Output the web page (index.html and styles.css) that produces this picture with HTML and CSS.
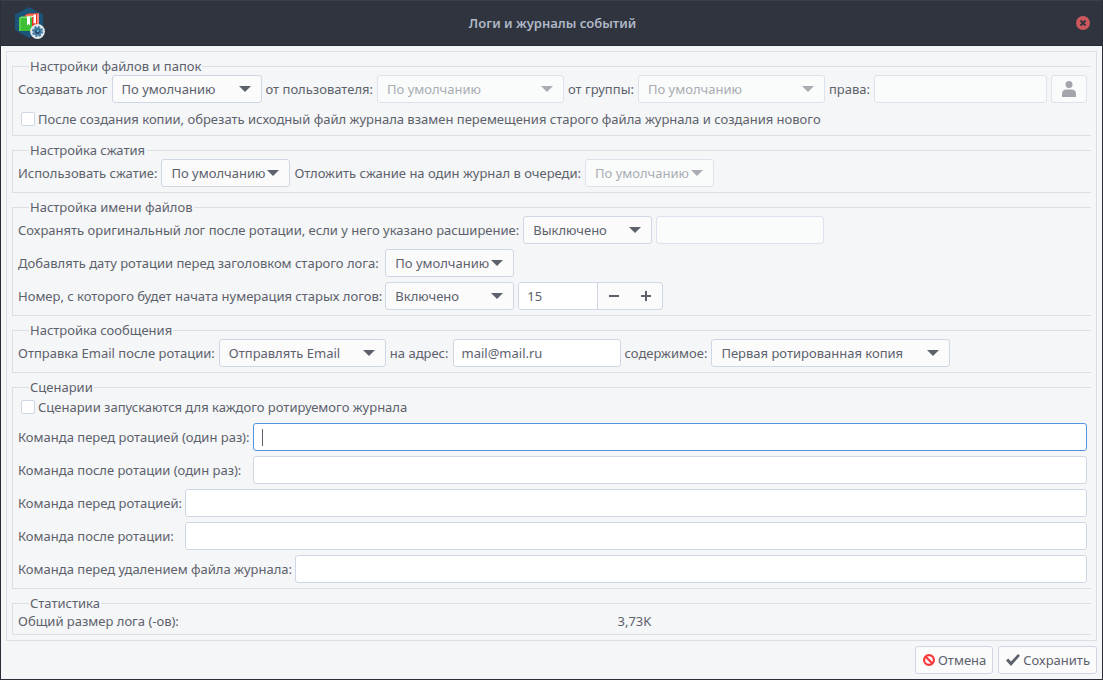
FILE: index.html
```html
<!DOCTYPE html>
<html lang="ru">
<head>
<meta charset="utf-8">
<meta name="viewport" content="width=device-width, initial-scale=1">
<title>Логи и журналы событий</title>
<link rel="stylesheet" href="styles.css">
</head>
<body>
<div class="window">
  <header class="titlebar">
    <svg class="app-icon" viewBox="0 0 32 34" aria-hidden="true">
      <path d="M14 1 28 8.500V24L14 32 0 24V8.500z" fill="#1b5478"/>
      <path d="M10 9 24 7v16l-14 2z" fill="#e8301f"/>
      <path d="M10 9l4-1.500h8L21 10H10z" fill="#ff5a3c"/>
      <path d="M11.500 9.800h7V11h-7z" fill="#fff"/>
      <path d="M18.500 8.500H21V18l-1.200-1.300L18.500 18z" fill="#fff"/>
      <path d="M22 8l2-1v15l-2 1z" fill="#ff8a80"/>
      <path d="M4 12h13v13H4z" fill="#3fbf35"/>
      <path d="M4 12l2-1.500h11V12z" fill="#7ee070"/>
      <path d="M4 12h2v13H4z" fill="#57d04c"/>
      <path d="M12 11h3v8.500L13.500 18 12 19.500z" fill="#fff"/>
      <circle cx="22.500" cy="25.500" r="7.400" fill="#dfe7ea"/>
      <circle cx="22.500" cy="25.500" r="4.300" fill="#4a7fa4"/>
      <circle cx="22.500" cy="25.500" r="4.600" fill="none" stroke="#4a7fa4" stroke-width="2" stroke-dasharray="2 1.600"/>
      <circle cx="22.500" cy="25.500" r="2.300" fill="#23405a"/>
      <circle cx="22.800" cy="25" r="1.200" fill="#58b4e4"/>
    </svg>
    <h1 class="title">Логи и журналы событий</h1>
    <button class="close" type="button" aria-label="Закрыть">
      <svg viewBox="0 0 14 14" aria-hidden="true">
        <circle cx="7" cy="7" r="7" fill="#cc575d"/>
        <path d="M4.500 4.500l5 5m0-5l-5 5" stroke="#2f343f" stroke-width="1.800"/>
      </svg>
    </button>
  </header>

  <form class="content">
    <div class="frame">
      <fieldset class="group">
        <legend>Настройки файлов и папок</legend>
        <div class="row">
          <label for="create">Создавать лог</label>
          <select id="create" class="w150"><option>По умолчанию</option></select>
          <label for="user">от пользователя:</label>
          <select id="user" class="w187" disabled><option>По умолчанию</option></select>
          <label for="grp">от группы:</label>
          <select id="grp" class="w187" disabled><option>По умолчанию</option></select>
          <label for="mode">права:</label>
          <input id="mode" class="grow" type="text" disabled>
          <button class="button user" type="button" disabled aria-label="Выбрать права">
            <svg viewBox="0 0 14 16" aria-hidden="true">
              <circle cx="7" cy="3.500" r="3.500"/>
              <path d="M0 16v-3.500C0 10 2 8.500 4.500 8.500h5C12 8.500 14 10 14 12.500V16z"/>
            </svg>
          </button>
        </div>
        <div class="check">
          <input id="copy" type="checkbox">
          <label for="copy">После создания копии, обрезать исходный файл журнала взамен перемещения старого файла журнала и создания нового</label>
        </div>
      </fieldset>

      <fieldset class="group">
        <legend>Настройка сжатия</legend>
        <div class="row">
          <label for="zip">Использовать сжатие:</label>
          <select id="zip" class="w129"><option>По умолчанию</option></select>
          <label for="delay">Отложить сжание на один журнал в очереди:</label>
          <select id="delay" class="w129" disabled><option>По умолчанию</option></select>
        </div>
      </fieldset>

      <fieldset class="group">
        <legend>Настройка имени файлов</legend>
        <div class="row">
          <label for="ext">Сохранять оригинальный лог после ротации, если у него указано расширение:</label>
          <select id="ext" class="w129"><option>Выключено</option></select>
          <input class="w168" type="text" disabled aria-label="Расширение">
        </div>
        <div class="pair">
          <label for="date">Добавлять дату ротации перед заголовком старого лога:</label>
          <div class="row">
            <select id="date" class="w129"><option>По умолчанию</option></select>
          </div>
          <label for="num">Номер, с которого будет начата нумерация старых логов:</label>
          <div class="row">
            <select id="num" class="w129"><option>Включено</option></select>
            <div class="spin">
              <input type="text" value="15" aria-label="Начальный номер">
              <button type="button" aria-label="Уменьшить"><svg viewBox="0 0 10 10" aria-hidden="true"><path d="M0 5h10"/></svg></button>
              <button type="button" aria-label="Увеличить"><svg viewBox="0 0 10 10" aria-hidden="true"><path d="M0 5h10M5 0v10"/></svg></button>
            </div>
          </div>
        </div>
      </fieldset>

      <fieldset class="group">
        <legend>Настройка сообщения</legend>
        <div class="row">
          <label for="send">Отправка Email после ротации:</label>
          <select id="send" class="w167"><option>Отправлять Email</option></select>
          <label for="mail">на адрес:</label>
          <input id="mail" class="w168" type="text" value="mail@mail.ru">
          <label for="body">содержимое:</label>
          <select id="body" class="w239"><option>Первая ротированная копия</option></select>
        </div>
      </fieldset>

      <fieldset class="group">
        <legend>Сценарии</legend>
        <div class="check">
          <input id="each" type="checkbox">
          <label for="each">Сценарии запускаются для каждого ротируемого журнала</label>
        </div>
        <div class="pair">
          <label for="first">Команда перед ротацией (один раз):</label>
          <input id="first" class="active" type="text">
          <label for="last">Команда после ротации (один раз):</label>
          <input id="last" type="text">
        </div>
        <div class="pair">
          <label for="pre">Команда перед ротацией:</label>
          <input id="pre" type="text">
          <label for="post">Команда после ротации:</label>
          <input id="post" type="text">
        </div>
        <div class="pair">
          <label for="remove">Команда перед удалением файла журнала:</label>
          <input id="remove" type="text">
        </div>
      </fieldset>

      <fieldset class="group">
        <legend>Статистика</legend>
        <div class="pair stats">
          <span>Общий размер лога (-ов):</span>
          <output>3,73K</output>
        </div>
      </fieldset>
    </div>

    <footer class="actions">
      <button class="button" type="button">
        <svg class="cancel" viewBox="0 0 12 12" aria-hidden="true"><circle cx="6" cy="6" r="4.900"/><path d="M2.500 2.500l7 7"/></svg>
        Отмена
      </button>
      <button class="button" type="submit">
        <svg class="save" viewBox="0 0 14 12" aria-hidden="true"><path d="M0 6.500 2.200 4.500 5 7.500 12 0l2 1.800L5 12z"/></svg>
        Сохранить
      </button>
    </footer>
  </form>
</div>
</body>
</html>
```
FILE: styles.css
```css
* {
  box-sizing: border-box;
}

body {
  margin: 0;
  color: #5c616c;
  font: 13px/18px "Noto Sans", sans-serif;
}

.window {
  display: flex;
  flex-direction: column;
  min-height: 100vh;
  border: 1px solid #2b2e39;
  border-top: 0;
  background: #f5f6f7;
}

.titlebar {
  display: grid;
  grid-template-columns: 32px 1fr 32px;
  align-items: center;
  height: 46px;
  padding: 0 12px 0 14px;
  border-top: 1px solid #3a3f4b;
  border-bottom: 1px solid #262a33;
  background: #2f343f;
}

.app-icon {
  width: 32px;
  height: 34px;
}

.title {
  margin: 0;
  color: #afb8c6;
  font-size: 13px;
  font-weight: 600;
  text-align: center;
}

.close {
  justify-self: end;
  width: 14px;
  height: 14px;
  padding: 0;
  border: 0;
  background: none;
}

.close svg {
  display: block;
}

.content {
  display: flex;
  flex: 1;
  flex-direction: column;
  gap: 5px;
  padding: 5px;
}

.frame {
  display: flex;
  flex-direction: column;
  gap: 5px;
  padding: 5px;
  border: 1px solid #dcdfe3;
}

.group {
  display: flex;
  flex-direction: column;
  gap: 5px;
  min-width: 0;
  margin: 0;
  padding: 0 4px 5px 5px;
  border: 1px solid #dcdfe6;
  border-right: 0;
}

legend {
  margin-left: 11px;
  padding: 0 1px;
}

label {
  white-space: nowrap;
}

.row {
  display: flex;
  align-items: center;
  gap: 4px;
}

.pair {
  display: grid;
  grid-template-columns: auto 1fr;
  align-items: center;
  gap: 5px 3px;
}

.stats {
  height: 17px;
}

.stats output {
  text-align: center;
}

.check {
  display: flex;
  align-items: center;
  gap: 3px;
  height: 22px;
  padding-left: 3px;
}

input,
select,
button {
  color: inherit;
  font: inherit;
}

input[type="text"],
select,
.button {
  height: 28px;
  margin: 0;
  border: 1px solid #cfd6e6;
  border-radius: 3px;
  outline: 0;
}

input[type="text"] {
  min-width: 0;
  padding: 0 8px;
  background: #fff;
}

input[type="text"]:disabled,
select:disabled,
.button:disabled {
  border-color: #dde2ec;
  background-color: #fafbfb;
  opacity: 1;
}

input[type="text"].active {
  border-color: #5294e2;
  background: linear-gradient(#5c616c, #5c616c) 8px center / 1px 17px no-repeat #fff;
}

input[type="checkbox"] {
  width: 14px;
  height: 14px;
  margin: 0;
  border: 1px solid #cfd6e6;
  border-radius: 2px;
  background: #fff;
  appearance: none;
}

select {
  padding: 0 20px 0 9px;
  background: url("data:image/svg+xml,%3Csvg xmlns='http://www.w3.org/2000/svg' width='12' height='6'%3E%3Cpath d='M0 0h12L6 6z' fill='%235c616c'/%3E%3C/svg%3E") right 10px center / 12px 6px no-repeat #fbfbfc;
  appearance: none;
}

select:disabled {
  color: #a9acb2;
  background-image: url("data:image/svg+xml,%3Csvg xmlns='http://www.w3.org/2000/svg' width='12' height='6'%3E%3Cpath d='M0 0h12L6 6z' fill='%23a9acb2'/%3E%3C/svg%3E");
}

.w129 {
  width: 129px;
}

.w150 {
  width: 150px;
}

.w167 {
  width: 167px;
}

.w168 {
  width: 168px;
}

.w187 {
  width: 187px;
}

.w239 {
  width: 239px;
}

.grow {
  flex: 1;
}

.spin {
  display: flex;
  width: 145px;
  height: 28px;
  border: 1px solid #cfd6e6;
  border-radius: 3px;
  background: #fbfbfc;
}

.spin input[type="text"] {
  flex: 1;
  height: 26px;
  border: 0;
  border-right: 1px solid #cfd6e6;
  border-radius: 2px 0 0 2px;
}

.spin button {
  display: flex;
  align-items: center;
  justify-content: center;
  width: 32px;
  padding: 0;
  border: 0;
  background: none;
}

.spin svg {
  width: 10px;
  height: 10px;
  stroke: #5c616c;
  stroke-width: 2;
}

.button {
  display: flex;
  align-items: center;
  gap: 3px;
  padding: 0 6px 0 7px;
  background: #fbfbfc;
}

.user {
  justify-content: center;
  width: 36px;
  padding: 0;
}

.user svg {
  width: 14px;
  height: 16px;
  fill: #a2a5ab;
}

.actions {
  display: flex;
  justify-content: flex-end;
  gap: 5px;
}

.cancel {
  width: 12px;
  height: 12px;
  fill: none;
  stroke: #f8393b;
  stroke-width: 2.2;
}

.save {
  width: 14px;
  height: 12px;
  fill: #5c616c;
}
```
